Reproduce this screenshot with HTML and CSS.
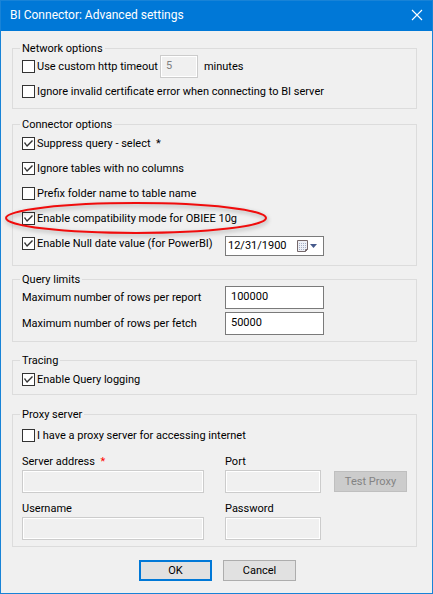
FILE: index.html
```html
<!DOCTYPE html>
<html lang="en">
<head>
    <meta charset="UTF-8">
    <meta name="viewport" content="width=device-width, initial-scale=1.0">
    <title>BI Connector: Advanced settings</title>
    <link rel="stylesheet" href="styles.css">
</head>
<body>
    <form class="dialog">
        <header class="titlebar">
            <h1>BI Connector: Advanced settings</h1>
            <button type="button" class="close" aria-label="Close">
                <svg width="12" height="12" viewBox="0 0 12 12"><path d="M1 1L11 11M11 1L1 11" stroke="#fff" stroke-width="1.1"/></svg>
            </button>
        </header>

        <main class="groups">
            <fieldset class="network">
                <legend>Network options</legend>
                <div class="row">
                    <input type="checkbox" id="use-timeout">
                    <label for="use-timeout">Use custom http timeout</label>
                    <input type="text" class="field timeout" id="timeout" value="5" disabled>
                    <label for="timeout">minutes</label>
                </div>
                <div class="row">
                    <input type="checkbox" id="ignore-cert">
                    <label for="ignore-cert">Ignore invalid certificate error when connecting to BI server</label>
                </div>
            </fieldset>

            <fieldset class="connector">
                <legend>Connector options</legend>
                <div class="row">
                    <input type="checkbox" id="suppress" checked>
                    <label for="suppress">Suppress query - select &nbsp;*</label>
                </div>
                <div class="row">
                    <input type="checkbox" id="ignore-tables" checked>
                    <label for="ignore-tables">Ignore tables with no columns</label>
                </div>
                <div class="row">
                    <input type="checkbox" id="prefix">
                    <label for="prefix">Prefix folder name to table name</label>
                </div>
                <div class="row marked">
                    <input type="checkbox" id="compat" checked>
                    <label for="compat">Enable compatibility mode for OBIEE 10g</label>
                    <svg class="ring" width="272" height="44" viewBox="0 0 272 44"><ellipse cx="136" cy="20" rx="130" ry="15" fill="none" stroke="#f00c0c" stroke-width="2"/></svg>
                </div>
                <div class="columns">
                    <div class="row">
                        <input type="checkbox" id="null-date" checked>
                        <label for="null-date">Enable Null date value (for PowerBI)</label>
                    </div>
                    <div class="date">
                        <input type="text" value="12/31/1900" aria-label="Null date value">
                        <button type="button" aria-label="Open calendar">
                            <svg width="22" height="14" viewBox="0 0 22 14">
                                <path d="M1.500 1.500h10v9l-2 2h-8z" fill="#eef0f6" stroke="#75686a"/>
                                <path d="M3 4.500h7M3 6.500h7M3 8.500h7M3 10.500h5" stroke="#a6b0c6" stroke-dasharray="1 1"/>
                                <path d="M9.500 12.500v-2h2" fill="none" stroke="#75686a"/>
                                <path d="M14 5h7l-3.500 4z" fill="#465a8c"/>
                            </svg>
                        </button>
                    </div>
                </div>
            </fieldset>

            <fieldset class="limits">
                <legend>Query limits</legend>
                <div class="columns">
                    <label for="max-report">Maximum number of rows per report</label>
                    <input type="text" class="field" id="max-report" value="100000">
                    <label for="max-fetch">Maximum number of rows per fetch</label>
                    <input type="text" class="field" id="max-fetch" value="50000">
                </div>
            </fieldset>

            <fieldset class="tracing">
                <legend>Tracing</legend>
                <div class="row">
                    <input type="checkbox" id="logging" checked>
                    <label for="logging">Enable Query logging</label>
                </div>
            </fieldset>

            <fieldset class="proxy">
                <legend>Proxy server</legend>
                <div class="row">
                    <input type="checkbox" id="use-proxy">
                    <label for="use-proxy">I have a proxy server for accessing internet</label>
                </div>
                <div class="proxy-grid">
                    <div class="stack">
                        <label for="server">Server address &nbsp;<span class="required">*</span></label>
                        <input type="text" class="field address" id="server" disabled>
                    </div>
                    <div class="stack">
                        <label for="port">Port</label>
                        <input type="text" class="field" id="port" disabled>
                    </div>
                    <button type="button" class="btn test" disabled>Test Proxy</button>
                    <div class="stack">
                        <label for="username">Username</label>
                        <input type="text" class="field address" id="username" disabled>
                    </div>
                    <div class="stack">
                        <label for="password">Password</label>
                        <input type="password" class="field" id="password" disabled>
                    </div>
                </div>
            </fieldset>
        </main>

        <footer class="actions">
            <button type="submit" class="btn primary">OK</button>
            <button type="button" class="btn">Cancel</button>
        </footer>
    </form>
</body>
</html>
```

FILE: styles.css
```css
* {
    box-sizing: border-box;
}
body {
    margin: 0;
    background: #f0f0f0;
    color: #000;
    font-family: Roboto, "Open Sans", sans-serif;
    font-size: 11px;
    line-height: 14px;
}
input, button {
    font: inherit;
    color: inherit;
    margin: 0;
}
.dialog {
    border: 1px solid #1883d7;
    border-top: 0;
    background: #f0f0f0;
}
.titlebar {
    display: flex;
    align-items: center;
    justify-content: space-between;
    height: 31px;
    padding: 0 9px 2px;
    background: #0078d7;
    border-top: 1px solid #1883d7;
    color: #fff;
}
.titlebar h1 {
    margin: 0;
    font-size: 12px;
    font-weight: normal;
}
.close {
    display: flex;
    padding: 0;
    border: 0;
    background: none;
}
.groups {
    padding: 11px 15px 0 11px;
}
fieldset {
    min-width: 0;
    margin: 0 0 9px;
    padding: 0 9px;
    border: 1px solid #dcdcdc;
}
legend {
    margin-left: -2px;
    padding: 1px 2px 0;
    line-height: 12px;
    margin-bottom: -1px;
}
label {
    padding-top: 1px;
    white-space: nowrap;
}
.network {
    padding-bottom: 4px;
}
.connector {
    padding-top: 1px;
    padding-bottom: 9px;
    margin-bottom: 7px;
}
.limits {
    padding-top: 1px;
    padding-bottom: 6px;
    margin-bottom: 12px;
}
.tracing {
    padding-top: 1px;
    padding-bottom: 2px;
    margin-bottom: 13px;
}
.proxy {
    padding-top: 3px;
    padding-bottom: 6px;
    margin-bottom: 0;
}
.row {
    display: flex;
    align-items: center;
    height: 25px;
    gap: 2px;
}
input[type="checkbox"] {
    appearance: none;
    flex: none;
    width: 13px;
    height: 13px;
    border: 1px solid #333;
    background: #fff;
}
input[type="checkbox"]:checked::before {
    content: "";
    display: block;
    width: 11px;
    height: 11px;
    background: #333;
    clip-path: polygon(1px 5px, 2px 4px, 4px 7px, 9px 2px, 10px 3px, 4px 9px);
}
.field {
    width: 100%;
    height: 23px;
    padding: 0 5px 3px;
    border: 1px solid #7a7a7a;
    border-radius: 0;
    background: #fff;
}
.field:disabled {
    border-color: #ccc;
    background: #f0f0f0;
    box-shadow: inset 0 0 0 1px #fff;
    color: #808080;
}
.timeout {
    width: 38px;
    margin-right: 4px;
}
.columns {
    display: grid;
    grid-template-columns: 203px 99px;
    row-gap: 3px;
    align-items: center;
}
.marked {
    position: relative;
}
/* red ring drawn over the compatibility option */
.ring {
    position: absolute;
    top: -8px;
    left: -22px;
    pointer-events: none;
    filter: drop-shadow(1px 2px 2px rgba(0, 0, 0, 0.3));
}
.date {
    display: flex;
    align-self: end;
    align-items: center;
    height: 20px;
    border: 1px solid #7a7a7a;
    background: #fff;
}
.date input {
    flex: 1;
    min-width: 0;
    padding: 0 2px;
    border: 0;
    background: none;
}
.date button {
    display: flex;
    padding: 0 5px 0 0;
    border: 0;
    background: none;
}
.proxy-grid {
    display: grid;
    grid-template-columns: 203px 96px 73px;
    row-gap: 8px;
    padding-top: 6px;
}
.stack {
    display: flex;
    flex-direction: column;
    gap: 1px;
}
.address {
    width: 182px;
}
.required {
    color: #f00;
}
.btn {
    width: 73px;
    height: 21px;
    padding: 0;
    border: 1px solid #adadad;
    background: #e1e1e1;
}
.primary {
    border: 2px solid #0078d7;
}
.test {
    align-self: end;
    margin: 0 0 1px 13px;
    border-color: #bfbfbf;
    background: #ccc;
    color: #838383;
}
.actions {
    display: flex;
    justify-content: center;
    gap: 11px;
    padding: 13px 0 12px 2px;
}
```
